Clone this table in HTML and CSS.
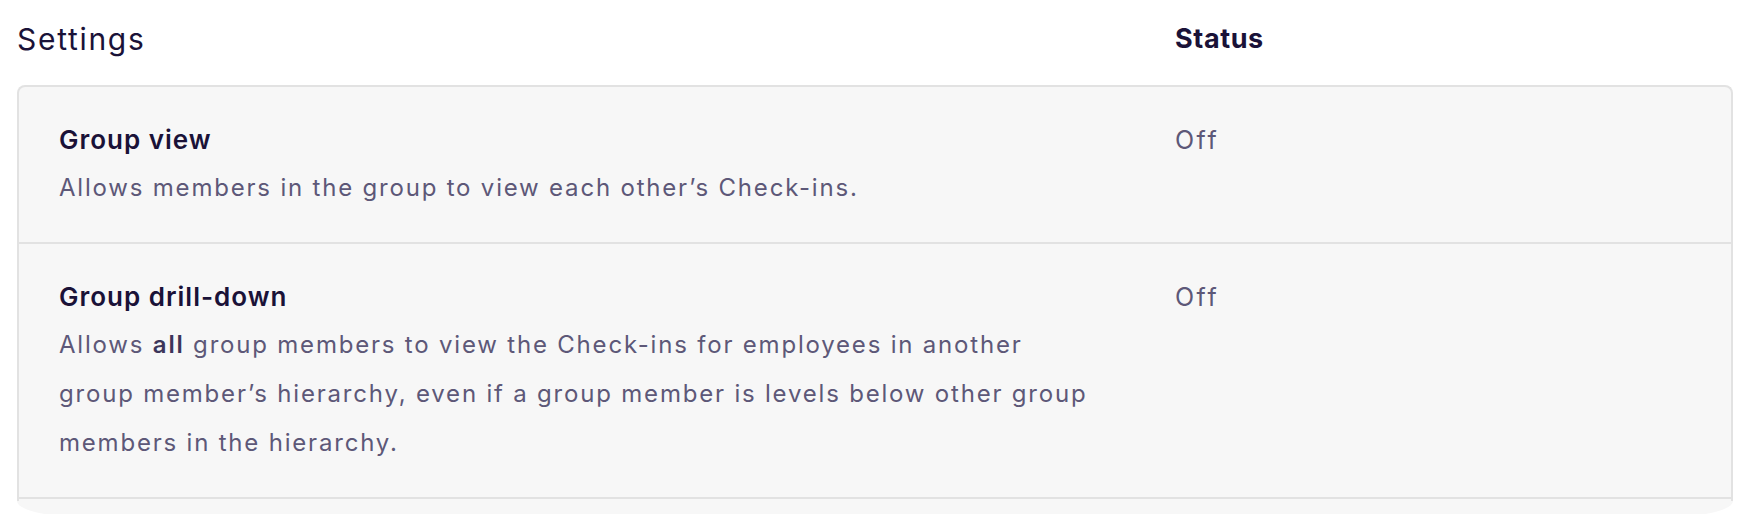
FILE: index.html
```html
<!DOCTYPE html>
<html lang="en">
<head>
<meta charset="utf-8">
<title>Settings</title>
<link rel="stylesheet" href="styles.css">
</head>
<body>
<div class="page">
  <div class="head">
    <div class="head-settings">Settings</div>
    <div class="head-status">Status</div>
  </div>
  <div class="card">
    <div class="panel">
      <div class="row">
        <div class="info">
          <div class="title">Group view</div>
          <div class="desc">Allows members in the group to view each other’s Check-ins.</div>
        </div>
        <div class="state">Off</div>
      </div>
      <div class="row">
        <div class="info">
          <div class="title">Group drill-down</div>
          <div class="desc">Allows <strong>all</strong> group members to view the Check-ins for employees in another group member’s hierarchy, even if a group member is levels below other group members in the hierarchy.</div>
        </div>
        <div class="state">Off</div>
      </div>
    </div>
    <div class="foot"></div>
  </div>
</div>
</body>
</html>
```

FILE: styles.css
```css
html, body {
  margin: 0;
  padding: 0;
  background: #ffffff;
}

body {
  font-family: "Inter", "Noto Sans", sans-serif;
  color: #1a1238;
}

.page {
  padding: 19px 17px 0 17px;
}

.head {
  display: grid;
  grid-template-columns: 1158px 1fr;
  align-items: center;
  height: 40px;
  margin-bottom: 26px;
}

.head-settings {
  font-size: 30px;
  font-weight: 400;
  letter-spacing: 1.7px;
  line-height: 40px;
  color: #1a1238;
}

.head-status {
  font-size: 27px;
  font-weight: 700;
  letter-spacing: 0.6px;
  line-height: 40px;
  color: #1a1238;
}

.card {
  display: flex;
  flex-direction: column;
}

.panel {
  background: #f7f7f7;
  border: 2px solid #e2e2e2;
  border-bottom: none;
  border-radius: 8px 8px 0 0;
  padding-bottom: 2px;
}

.row {
  display: grid;
  grid-template-columns: 1116px 1fr;
  padding: 30px 0 30px 40px;
  border-bottom: 2px solid #e2e2e2;
}

.title {
  font-size: 26px;
  font-weight: 600;
  letter-spacing: 1px;
  line-height: 46px;
  color: #1a1238;
}

.desc {
  max-width: 1036px;
  font-size: 24px;
  font-weight: 400;
  letter-spacing: 1.8px;
  line-height: 49px;
  color: #5d5878;
}

.desc strong {
  font-weight: 600;
  color: #3c355a;
}

.state {
  font-size: 25px;
  letter-spacing: 2.5px;
  line-height: 46px;
  color: #5d5878;
}

.foot {
  height: 16px;
  background: #f7f7f7;
  border-radius: 0 0 64px 64px / 0 0 16px 16px;
}
```
